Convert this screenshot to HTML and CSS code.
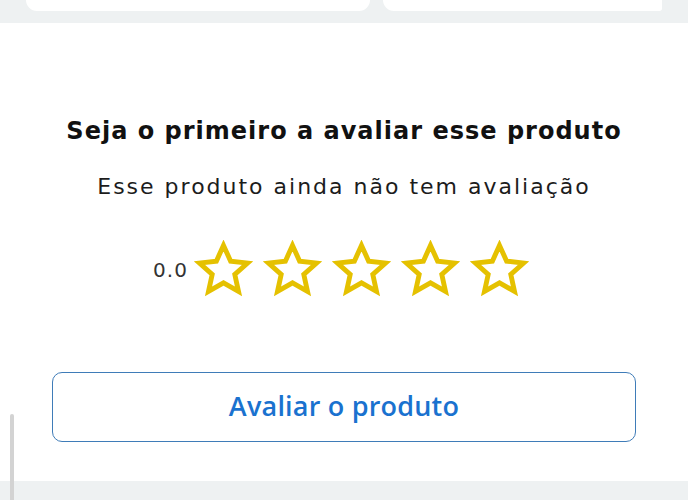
FILE: index.html
```html
<!DOCTYPE html>
<html lang="pt-BR">
<head>
    <meta charset="UTF-8">
    <meta name="viewport" content="width=device-width, initial-scale=1.0">
    <title>Avaliações</title>
    <link rel="stylesheet" href="styles.css">
</head>
<body>

    <!-- Cards above (cut off) -->
    <div class="top-band">
        <div class="card card-wide"></div>
        <div class="card card-narrow"></div>
    </div>

    <section class="reviews">
        <h2>Seja o primeiro a avaliar esse produto</h2>
        <p>Esse produto ainda não tem avaliação</p>

        <div class="rating">
            <span class="score">0.0</span>
            <div class="stars">
                <svg class="star" viewBox="0 0 24 24"><polygon points="12,2.2 14.9,8.6 21.8,9.4 16.6,14 18.1,20.9 12,17.4 5.9,20.9 7.4,14 2.2,9.4 9.1,8.6"/></svg>
                <svg class="star" viewBox="0 0 24 24"><polygon points="12,2.2 14.9,8.6 21.8,9.4 16.6,14 18.1,20.9 12,17.4 5.9,20.9 7.4,14 2.2,9.4 9.1,8.6"/></svg>
                <svg class="star" viewBox="0 0 24 24"><polygon points="12,2.2 14.9,8.6 21.8,9.4 16.6,14 18.1,20.9 12,17.4 5.9,20.9 7.4,14 2.2,9.4 9.1,8.6"/></svg>
                <svg class="star" viewBox="0 0 24 24"><polygon points="12,2.2 14.9,8.6 21.8,9.4 16.6,14 18.1,20.9 12,17.4 5.9,20.9 7.4,14 2.2,9.4 9.1,8.6"/></svg>
                <svg class="star" viewBox="0 0 24 24"><polygon points="12,2.2 14.9,8.6 21.8,9.4 16.6,14 18.1,20.9 12,17.4 5.9,20.9 7.4,14 2.2,9.4 9.1,8.6"/></svg>
            </div>
        </div>

        <button class="rate-button">Avaliar o produto</button>
    </section>

    <div class="bottom-band"></div>

    <!-- Scroll indicator -->
    <div class="scrollbar"></div>

</body>
</html>
```

FILE: styles.css
```css
/* --- Basic Setup --- */
:root {
    --band-bg: #eef1f2;
    --card-bg: #ffffff;
    --text-color: #111;
    --star-color: #e5c100;
    --accent-color: #1a72cf;
    --border-color: #3f7cb8;
}

body {
    margin: 0;
    background-color: #fff;
    color: var(--text-color);
    font-family: "DejaVu Sans", "Open Sans", Arial, sans-serif;
    height: 500px;
    overflow: hidden;
    position: relative;
}

/* --- Top band with cut-off cards --- */
.top-band {
    display: flex;
    gap: 13px;
    height: 23px;
    padding: 0 26px;
    background-color: var(--band-bg);
}

.card {
    height: 11px;
    background-color: var(--card-bg);
    border-radius: 0 0 12px 12px;
}

.card-wide {
    width: 344px;
}

.card-narrow {
    flex: 1;
    border-radius: 0 0 3px 12px;
}

/* --- Reviews section --- */
.reviews {
    height: 458px;
    box-sizing: border-box;
    padding: 92px 52px 0;
    display: flex;
    flex-direction: column;
    align-items: center;
}

h2 {
    margin: 0;
    font-size: 24px;
    font-weight: 600;
    letter-spacing: 1px;
    line-height: 32px;
    white-space: nowrap;
}

p {
    margin: 25px 0 0;
    font-size: 22px;
    letter-spacing: 2px;
    line-height: 30px;
    color: #1c1c1c;
    white-space: nowrap;
}

.rating {
    display: flex;
    align-items: center;
    margin-top: 38px;
    margin-right: 6px;
}

.score {
    font-size: 20px;
    letter-spacing: 1px;
    color: #333;
    margin-right: 6px;
}

.stars {
    display: flex;
    gap: 10px;
}

.star {
    width: 59px;
    height: 59px;
    fill: none;
    stroke: var(--star-color);
    stroke-width: 2;
}

/* --- Button --- */
.rate-button {
    margin-top: 73px;
    width: 100%;
    height: 70px;
    padding: 0 0 3px;
    background-color: #fff;
    border: 1.5px solid var(--border-color);
    border-radius: 10px;
    font-family: "Open Sans", sans-serif;
    font-size: 27px;
    font-weight: 600;
    letter-spacing: 0.2px;
    color: var(--accent-color);
}

.bottom-band {
    height: 19px;
    background-color: var(--band-bg);
}

/* --- Scroll indicator overlay --- */
.scrollbar {
    position: absolute;
    left: 10px;
    top: 414px;
    width: 4px;
    height: 90px;
    border-radius: 2px;
    background-color: #d3d3d3;
}
```
